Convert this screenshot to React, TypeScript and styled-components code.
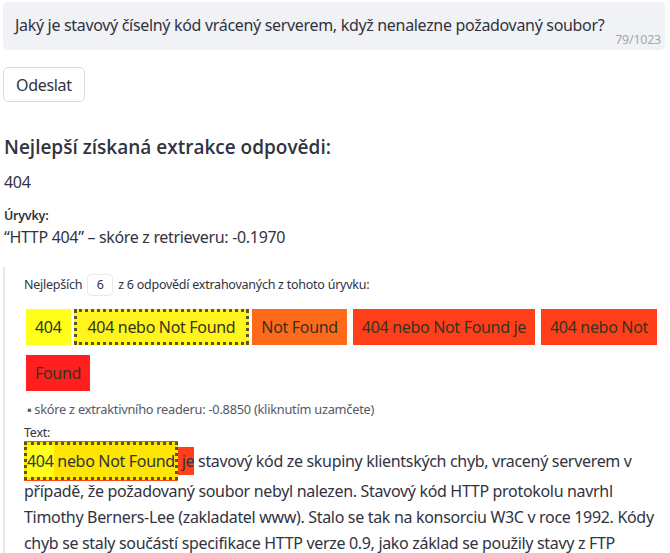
import styled, { createGlobalStyle } from "styled-components";

const GlobalStyle = createGlobalStyle`
  body {
    margin: 0;
    background: #ffffff;
    color: #31333f;
    font-family: "Noto Sans", "Liberation Sans", sans-serif;
  }
  * {
    letter-spacing: -0.02em;
  }
`;

const Page = styled.div`
  padding: 2px 5px 0 3px;
  display: flex;
  flex-direction: column;
`;

const QuestionBox = styled.div`
  position: relative;
  background: #f0f2f6;
  border-radius: 5px;
  height: 48px;
  padding: 0 12px 3px;
  display: flex;
  align-items: center;
  font-size: 16px;
  box-sizing: border-box;
`;

const Counter = styled.span`
  position: absolute;
  right: 4px;
  bottom: 2px;
  font-size: 12.5px;
  color: #a3a8b4;
`;

const SendButton = styled.button`
  align-self: flex-start;
  margin-top: 17px;
  height: 35px;
  padding: 0 12px;
  background: #fff;
  border: 1px solid #dadbe0;
  border-radius: 5px;
  font-family: inherit;
  font-size: 16px;
  color: #31333f;
`;

const Heading = styled.h3`
  margin: 33px 0 0 1px;
  font-family: "Open Sans", sans-serif;
  font-size: 19px;
  font-weight: 600;
  line-height: 24px;
  && {
    letter-spacing: 0;
  }
`;

const Answer = styled.div`
  margin: 12px 0 0 1px;
  font-size: 16px;
  line-height: 22px;
`;

const Label = styled.div`
  margin: 14px 0 0 1px;
  font-size: 12.5px;
  font-weight: 600;
  line-height: 18px;
`;

const Snippet = styled.div`
  margin-left: 1px;
  font-size: 16px;
  line-height: 24px;
`;

const ResultBox = styled.div`
  margin-top: 18px;
  border-left: 2px solid #e6e8ee;
  padding: 7px 0 0 19px;
`;

const TopRow = styled.div`
  display: flex;
  align-items: center;
  gap: 5px;
  font-size: 12.5px;
  line-height: 22px;
`;

const NumInput = styled.span`
  display: inline-flex;
  align-items: center;
  justify-content: center;
  width: 24px;
  height: 20px;
  border: 1px solid #e6e8ee;
  border-radius: 4px;
  background: #fff;
`;

const Chips = styled.div`
  display: flex;
  flex-wrap: wrap;
  row-gap: 10px;
  margin: 13px 0 0 -1px;
`;

const Chip = styled.span<{ $bg: string; $selected?: boolean }>`
  display: inline-flex;
  align-items: center;
  height: 36px;
  box-sizing: border-box;
  padding: 0 ${(p) => (p.$selected ? 11 : 9)}px;
  margin: 0 ${(p) => (p.$selected ? 0 : 3)}px;
  background: ${(p) => p.$bg};
  font-size: 16px;
  color: #37331f;
  border: ${(p) => (p.$selected ? "3px dotted #5c5520" : "none")};
`;

const ScoreLine = styled.div`
  margin-top: 9px;
  font-size: 12.8px;
  line-height: 18px;
  color: #555866;
  padding-left: 3px;
`;

const TextLabel = styled.div`
  margin-top: 6px;
  font-size: 12.5px;
  line-height: 18px;
`;

const Paragraph = styled.p`
  margin: 0;
  font-size: 16px;
  line-height: 26px;
  padding-right: 4px;
`;

const OuterMark = styled.span`
  background: #ff3f1a;
  padding: 3px 0;
`;

const DottedMark = styled.span`
  display: inline-block;
  border: 3px dotted #5c5520;
  background: #ffe600;
  line-height: 32px;
  margin-bottom: -2px;
  box-shadow: 0 -1px 0 #ff4a1a, 0 1px 0 #ff4a1a;
`;

const InnerMark = styled.span`
  display: inline-block;
  background: #ffff1a;
  line-height: 32px;
`;

const chips = [
  { text: "404", bg: "#ffff1a" },
  { text: "404 nebo Not Found", bg: "#fff51c", selected: true },
  { text: "Not Found", bg: "#ff6a1a" },
  { text: "404 nebo Not Found je", bg: "#ff3f1a" },
  { text: "404 nebo Not", bg: "#ff3f1a" },
  { text: "Found", bg: "#ff1f1f" },
];

export default function App() {
  return (
    <Page>
      <GlobalStyle />
      <QuestionBox>
        Jaký je stavový číselný kód vrácený serverem, když nenalezne požadovaný soubor?
        <Counter>79/1023</Counter>
      </QuestionBox>
      <SendButton>Odeslat</SendButton>
      <Heading>Nejlepší získaná extrakce odpovědi:</Heading>
      <Answer>404</Answer>
      <Label>Úryvky:</Label>
      <Snippet>“HTTP 404” – skóre z retrieveru: -0.1970</Snippet>
      <ResultBox>
        <TopRow>
          Nejlepších <NumInput>6</NumInput> z 6 odpovědí extrahovaných z tohoto úryvku:
        </TopRow>
        <Chips>
          {chips.map((c) => (
            <Chip key={c.text} $bg={c.bg} $selected={c.selected}>
              {c.text}
            </Chip>
          ))}
        </Chips>
        <ScoreLine>▪ skóre z extraktivního readeru: -0.8850 (kliknutím uzamčete)</ScoreLine>
        <TextLabel>Text:</TextLabel>
        <Paragraph>
          <OuterMark>
            <DottedMark>
              <InnerMark>404</InnerMark> nebo Not Found
            </DottedMark>{" "}
            je
          </OuterMark>{" "}
          stavový kód ze skupiny klientských chyb, vracený serverem v případě, že požadovaný
          soubor nebyl nalezen. Stavový kód HTTP protokolu navrhl Timothy Berners-Lee
          (zakladatel www). Stalo se tak na konsorciu W3C v roce 1992. Kódy chyb se staly
          součástí specifikace HTTP verze 0.9, jako základ se použily stavy z FTP
        </Paragraph>
      </ResultBox>
    </Page>
  );
}
